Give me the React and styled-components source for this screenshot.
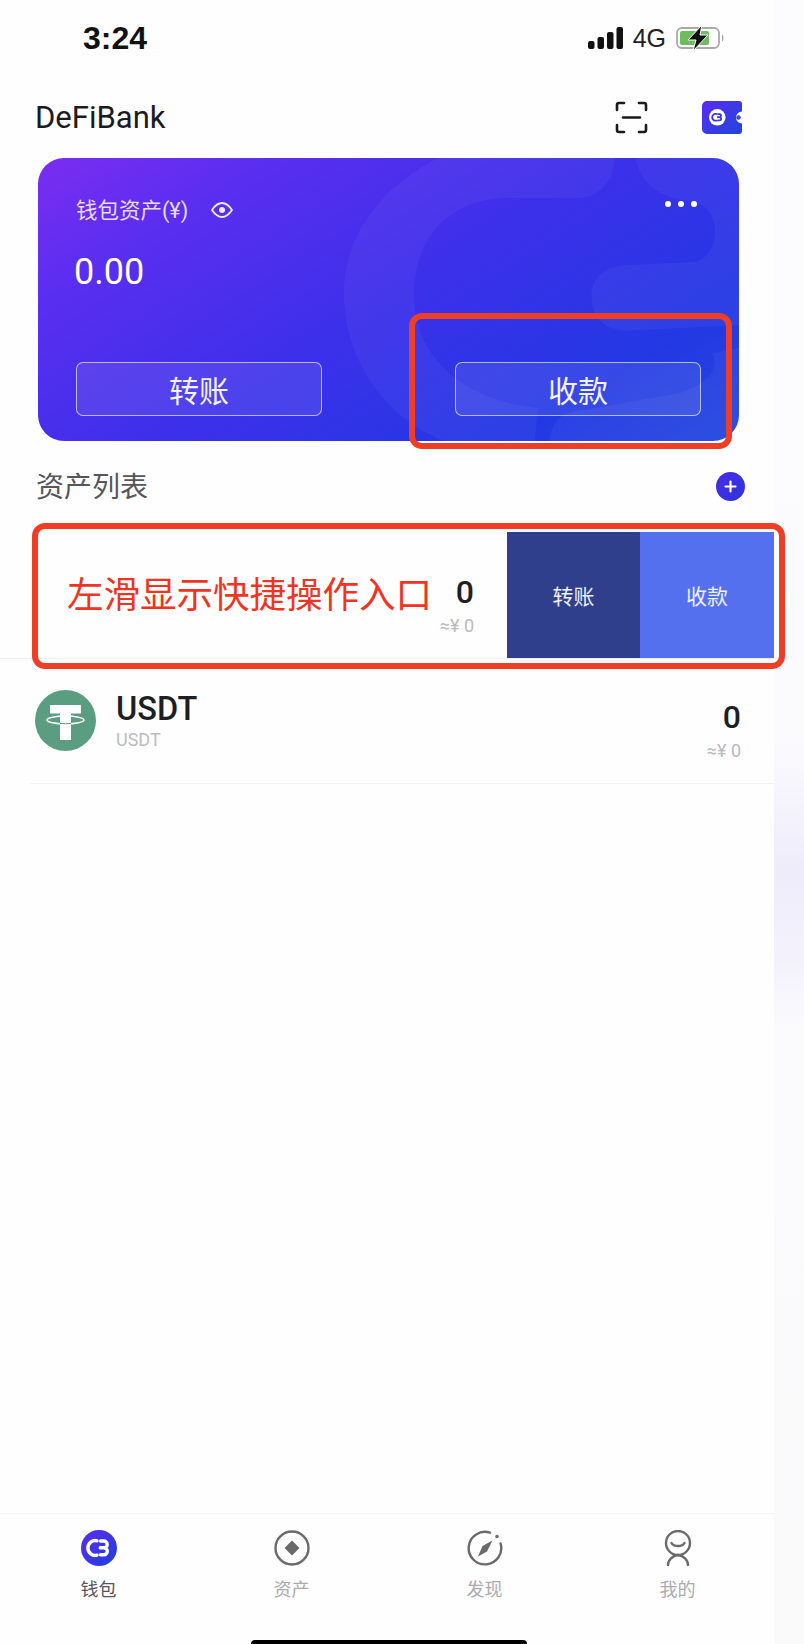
import React from 'react';
import styled, { createGlobalStyle } from 'styled-components';

const GlobalStyle = createGlobalStyle`
  html, body {
    margin: 0;
    padding: 0;
    background: #fefefe;
    font-family: Roboto, "Noto Sans CJK SC", "Noto Sans", sans-serif;
  }
`;

const Stage = styled.div`
  display: flex;
  width: 804px;
  height: 1644px;
  overflow: hidden;
`;

const Phone = styled.div`
  position: relative;
  display: flex;
  flex-direction: column;
  width: 774px;
  background: #fefefe;
`;

const SideStrip = styled.div`
  width: 30px;
  background: linear-gradient(
    180deg,
    #fcfcfe 0,
    #fbfbfe 740px,
    #eeecfb 870px,
    #f3f2fc 960px,
    #fbfbfd 1030px,
    #fafafb 100%
  );
`;

const StatusBar = styled.div`
  display: flex;
  align-items: center;
  justify-content: space-between;
  box-sizing: border-box;
  height: 76px;
  padding: 0 49px 0 83px;
`;

const Clock = styled.span`
  font-family: "Liberation Sans", sans-serif;
  font-size: 32px;
  font-weight: 700;
  color: #111;
`;

const StatusIcons = styled.div`
  display: flex;
  align-items: center;
  gap: 10px;
`;

const Network = styled.span`
  font-family: "Liberation Sans", sans-serif;
  font-size: 25px;
  color: #222;
`;

const Header = styled.header`
  display: flex;
  align-items: center;
  box-sizing: border-box;
  height: 82px;
  padding: 0 32px 0 35px;
`;

const Brand = styled.h1`
  flex: 1;
  margin: 0;
  font-size: 31px;
  font-weight: 400;
  color: #1b1b1f;
`;

const HeaderActions = styled.div`
  display: flex;
  align-items: center;
  gap: 54px;
`;

const CardWrap = styled.div`
  position: relative;
  width: 701px;
  margin-left: 38px;
`;

const Card = styled.section`
  position: relative;
  display: flex;
  flex-direction: column;
  box-sizing: border-box;
  height: 283px;
  padding: 38px 38px 25px 38px;
  border-radius: 26px;
  overflow: hidden;
  color: #fff;
  background: linear-gradient(148deg, #7b2df1 0%, #5a2ef0 20%, #3c30ea 50%, #2338e4 80%, #2448de 100%);
`;

const CardArt = styled.svg`
  position: absolute;
  inset: 0;
  width: 100%;
  height: 100%;
`;

const LabelRow = styled.div`
  position: relative;
  display: flex;
  align-items: center;
  gap: 23px;
  height: 24px;
`;

const CardLabel = styled.span`
  font-size: 21.5px;
  color: #e7dcfb;
`;

const EyeSlot = styled.span`
  display: flex;
  margin-top: 4px;
`;

const MoreDots = styled.div`
  display: flex;
  gap: 7px;
  margin: -8px 4px 0 auto;
`;

const Dot = styled.i`
  width: 6px;
  height: 6px;
  border-radius: 50%;
  background: #fff;
`;

const CardAmount = styled.div`
  position: relative;
  margin: 30px 0 0 -2px;
  font-size: 36px;
  line-height: 44px;
  color: #fdfcff;
`;

const CardButtons = styled.div`
  position: relative;
  display: flex;
  justify-content: space-between;
  margin-top: auto;
`;

const CardButton = styled.button`
  width: 246px;
  height: 54px;
  padding: 0;
  border: 1px solid rgba(255, 255, 255, 0.62);
  border-radius: 7px;
  background: rgba(255, 255, 255, 0.09);
  color: #f3f2fe;
  font-family: "Noto Sans CJK SC", sans-serif;
  font-size: 30px;
  line-height: 1;
`;

const Callout = styled.div`
  position: absolute;
  top: ${p => p.$top}px;
  left: ${p => p.$left}px;
  width: ${p => p.$width}px;
  height: ${p => p.$height}px;
  box-sizing: border-box;
  border: 6px solid #ee3e26;
  border-radius: 13px;
  pointer-events: none;
`;

const SectionHead = styled.div`
  display: flex;
  align-items: center;
  justify-content: space-between;
  box-sizing: border-box;
  height: 91px;
  padding: 0 29px 0 36px;
`;

const SectionTitle = styled.h2`
  margin: -3px 0 0;
  font-family: "Noto Sans CJK SC", sans-serif;
  font-size: 28px;
  font-weight: 400;
  color: #55555b;
`;

const AddButton = styled.span`
  display: flex;
  align-items: center;
  justify-content: center;
  width: 29px;
  height: 29px;
  border-radius: 50%;
  background: linear-gradient(135deg, #4a2be8, #2b35dc);
`;

const SwipeWrap = styled.div`
  position: relative;
`;

const SwipeRow = styled.div`
  display: flex;
  align-items: stretch;
  height: 127px;
  box-sizing: border-box;
  padding-left: 67px;
  border-bottom: 1px solid #eeeeee;
`;

const Hint = styled.span`
  align-self: center;
  margin-top: -4px;
  font-family: "Noto Sans CJK SC", sans-serif;
  font-size: 36.5px;
  line-height: 1;
  white-space: nowrap;
  color: #ee3524;
`;

const Balance = styled.div`
  display: flex;
  flex-direction: column;
  align-items: flex-end;
  justify-content: center;
  margin-left: auto;
  padding-top: 19px;
`;

const BalanceValue = styled.span`
  font-size: 32px;
  font-weight: 500;
  line-height: 38px;
  color: #1f1f23;
`;

const BalanceFiat = styled.span`
  margin-top: 4px;
  font-size: 18px;
  line-height: 22px;
  color: #b9b9bd;
`;

const SwipeActions = styled.div`
  display: flex;
  margin-left: 33px;
`;

const SwipeAction = styled.button`
  width: ${p => p.$width}px;
  padding: 0;
  border: 0;
  background: ${p => p.$bg};
  color: #eef0fb;
  font-family: "Noto Sans CJK SC", sans-serif;
  font-size: 21px;
`;

const AssetRow = styled.div`
  display: flex;
  align-items: center;
  box-sizing: border-box;
  height: 125px;
  margin-left: 30px;
  padding: 0 33px 2px 5px;
  border-bottom: 1px solid #f2f2f2;
`;

const AssetText = styled.div`
  display: flex;
  flex-direction: column;
  margin-left: 20px;
`;

const AssetName = styled.span`
  margin-top: 1px;
  font-size: 32.5px;
  font-weight: 500;
  line-height: 38px;
  color: #1f1f23;
`;

const AssetSub = styled.span`
  margin-top: 1px;
  font-size: 18px;
  line-height: 22px;
  color: #bcbcc0;
`;

const Spacer = styled.div`
  flex: 1;
`;

const TabBar = styled.nav`
  display: grid;
  grid-template-columns: repeat(4, 1fr);
  box-sizing: border-box;
  height: 131px;
  padding: 16px 0 0 2px;
  border-top: 1px solid #f3f3f3;
`;

const Tab = styled.div`
  display: flex;
  flex-direction: column;
  align-items: center;
`;

const TabLabel = styled.span`
  margin-top: 9px;
  font-family: "Noto Sans CJK SC", sans-serif;
  font-size: 18px;
  line-height: 26px;
  color: ${p => (p.$active ? '#55555a' : '#ababae')};
`;

const HomeBar = styled.div`
  position: absolute;
  left: 251px;
  bottom: 0;
  width: 276px;
  height: 4px;
  border-radius: 4px 4px 0 0;
  background: #000;
`;

const SignalIcon = () => (
  <svg width="35" height="22" viewBox="0 0 35 22">
    <rect x="0" y="14" width="6.5" height="8" rx="2" fill="#111" />
    <rect x="9.5" y="10" width="6.5" height="12" rx="2" fill="#111" />
    <rect x="19" y="5" width="6.5" height="17" rx="2" fill="#111" />
    <rect x="28.5" y="0" width="6.5" height="22" rx="2" fill="#111" />
  </svg>
);

const BatteryIcon = () => (
  <svg width="49" height="26" viewBox="0 0 49 26">
    <rect x="1" y="3" width="42" height="20" rx="5" fill="none" stroke="#a9aaa9" strokeWidth="1.8" />
    <rect x="4" y="6" width="29" height="14" rx="2" fill="#6dbd5f" />
    <path d="M46 9.5c2 1 2 6 0 7z" fill="#a9aaa9" />
    <path d="M26 0 12 15h8l-3 11 15-16h-8z" fill="#111" stroke="#fff" strokeWidth="1" />
  </svg>
);

const ScanIcon = () => (
  <svg width="33" height="33" viewBox="0 0 33 33" fill="none" stroke="#1b1b1f" strokeWidth="2.6" strokeLinecap="round" strokeLinejoin="round">
    <path d="M2 9V4a2 2 0 0 1 2-2h5M24 2h5a2 2 0 0 1 2 2v5M2 24v5a2 2 0 0 0 2 2h5M24 31h5a2 2 0 0 0 2-2v-5M8 16.5h17" />
  </svg>
);

// round "C3" mark, reused at different sizes
const LogoMark = ({ stroke = '#fff', width = 3.4 }) => (
  <g fill="none" stroke={stroke} strokeWidth={width} strokeLinecap="round">
    <path d="M16 10.800a7.400 7.400 0 1 0 0 14.400" />
    <path d="M19.500 11h3.300a3.300 3.300 0 0 1 0 6.800h-3.600M22.800 17.800a3.500 3.500 0 0 1 0 7h-3.300" />
  </g>
);

const WalletIcon = () => (
  <svg width="40" height="33" viewBox="0 0 40 33">
    <defs>
      <linearGradient id="walletFill" x1="0" y1="0" x2="1" y2="1">
        <stop offset="0" stopColor="#5a2cf0" />
        <stop offset="1" stopColor="#1f46dc" />
      </linearGradient>
    </defs>
    <path
      d="M5 0h32a3 3 0 0 1 3 3v7.5a6 6 0 0 0 0 12V30a3 3 0 0 1-3 3H5a5 5 0 0 1-5-5V5a5 5 0 0 1 5-5z"
      fill="url(#walletFill)"
    />
    <circle cx="36.5" cy="16.5" r="2.2" fill="#3a45e0" />
    <g transform="translate(7 8) scale(0.46)">
      <circle cx="18" cy="18" r="18" fill="#fff" />
      <LogoMark stroke="#3a34e6" width={4} />
    </g>
  </svg>
);

const EyeIcon = () => (
  <svg width="22" height="16" viewBox="0 0 22 16">
    <path d="M1 8c3-4.500 6.300-7 10-7s7 2.500 10 7c-3 4.500-6.300 7-10 7S4 12.500 1 8z" fill="none" stroke="#f1ebff" strokeWidth="1.8" />
    <circle cx="11" cy="8" r="3" fill="#f1ebff" />
  </svg>
);

const PlusIcon = () => (
  <svg width="13" height="13" viewBox="0 0 13 13" stroke="#fff" strokeWidth="2.2" strokeLinecap="round">
    <path d="M6.500 1.500v10M1.500 6.500h10" />
  </svg>
);

const TetherIcon = () => (
  <svg width="61" height="61" viewBox="0 0 61 61">
    <circle cx="30.500" cy="30.500" r="30.500" fill="#5b9d80" />
    <path d="M15 15h31v8.500H36V50H25V23.500H15z" fill="#fff" />
    <ellipse cx="30.500" cy="30" rx="18.500" ry="4" fill="none" stroke="#fff" strokeWidth="1.500" />
    <path d="M25 33.400c3.500.5 7.500.5 11 0" fill="none" stroke="#5b9d80" strokeWidth="1" />
  </svg>
);

const WalletTab = () => (
  <svg width="36" height="36" viewBox="0 0 36 36">
    <defs>
      <linearGradient id="tabFill" x1="0" y1="0" x2="1" y2="1">
        <stop offset="0" stopColor="#5a2cf0" />
        <stop offset="1" stopColor="#1f3fdc" />
      </linearGradient>
    </defs>
    <circle cx="18" cy="18" r="18" fill="url(#tabFill)" />
    <LogoMark />
  </svg>
);

const AssetsTab = () => (
  <svg width="36" height="36" viewBox="0 0 36 36">
    <circle cx="18" cy="18" r="16.500" fill="none" stroke="#6a6a6a" strokeWidth="2.400" />
    <path d="M18 10.500 25.500 18 18 25.500 10.500 18z" fill="#6a6a6a" />
  </svg>
);

const DiscoverTab = () => (
  <svg width="36" height="36" viewBox="0 0 36 36">
    <path d="M23 2.600A16.300 16.300 0 1 0 33.600 13.500" fill="none" stroke="#6a6a6a" strokeWidth="2.400" strokeLinecap="round" />
    <circle cx="30" cy="6.500" r="1.800" fill="#6a6a6a" />
    <path d="M25.500 10.500 20 21.500 11 26.500 15.500 16z" fill="#6a6a6a" />
  </svg>
);

const ProfileTab = () => (
  <svg width="36" height="36" viewBox="0 0 36 36" fill="none" stroke="#6a6a6a" strokeWidth="2.400" strokeLinecap="round">
    <circle cx="18" cy="13" r="12" />
    <path d="M11.500 13c2 4 11 4 13 0" />
    <path d="M8 35c0-5 4.500-9.500 10-10 5.500.5 10 5 10 10" />
  </svg>
);

const TABS = [
  { label: '钱包', icon: <WalletTab />, active: true },
  { label: '资产', icon: <AssetsTab /> },
  { label: '发现', icon: <DiscoverTab /> },
  { label: '我的', icon: <ProfileTab /> },
];

const App = () => (
  <Stage>
    <GlobalStyle />
    <Phone>
      <StatusBar>
        <Clock>3:24</Clock>
        <StatusIcons>
          <SignalIcon />
          <Network>4G</Network>
          <BatteryIcon />
        </StatusIcons>
      </StatusBar>

      <Header>
        <Brand>DeFiBank</Brand>
        <HeaderActions>
          <ScanIcon />
          <WalletIcon />
        </HeaderActions>
      </Header>

      <CardWrap>
        <Card>
          <CardArt viewBox="0 0 699 283" preserveAspectRatio="none">
            <g fill="#fff" fillOpacity="0.045">
              <path d="M399 0C340 30 305 80 305 135c0 65 40 125 100 148h90c2-13 2-25 4-33-59-5-124-40-124-113 0-57 35-97 95-97h70c20 0 35-20 35-40z" />
              <path d="M596 0c4 25 24 40 54 43 20 4 25 17 25 30 0 17-10 31-23 31l-62 3c-25 0-38 13-38 30 0 18 8 33 33 36l114-6V0z" />
              <path d="M510 283c2-21 15-31 35-31l95-17c30-10 40-25 32-40l27-5v93z" />
            </g>
          </CardArt>
          <LabelRow>
            <CardLabel>钱包资产(¥)</CardLabel>
            <EyeSlot>
              <EyeIcon />
            </EyeSlot>
            <MoreDots>
              <Dot />
              <Dot />
              <Dot />
            </MoreDots>
          </LabelRow>
          <CardAmount>0.00</CardAmount>
          <CardButtons>
            <CardButton>转账</CardButton>
            <CardButton>收款</CardButton>
          </CardButtons>
        </Card>
        <Callout $top={155} $left={371} $width={323} $height={136} />
      </CardWrap>

      <SectionHead>
        <SectionTitle>资产列表</SectionTitle>
        <AddButton>
          <PlusIcon />
        </AddButton>
      </SectionHead>

      <SwipeWrap>
        <SwipeRow>
          <Hint>左滑显示快捷操作入口</Hint>
          <Balance>
            <BalanceValue>0</BalanceValue>
            <BalanceFiat>≈¥ 0</BalanceFiat>
          </Balance>
          <SwipeActions>
            <SwipeAction $width={133} $bg="#2f3f8c">转账</SwipeAction>
            <SwipeAction $width={134} $bg="#5470ee">收款</SwipeAction>
          </SwipeActions>
        </SwipeRow>
        <Callout $top={-9} $left={32} $width={753} $height={146} />
      </SwipeWrap>

      <AssetRow>
        <TetherIcon />
        <AssetText>
          <AssetName>USDT</AssetName>
          <AssetSub>USDT</AssetSub>
        </AssetText>
        <Balance>
          <BalanceValue>0</BalanceValue>
          <BalanceFiat>≈¥ 0</BalanceFiat>
        </Balance>
      </AssetRow>

      <Spacer />

      <TabBar>
        {TABS.map(tab => (
          <Tab key={tab.label}>
            {tab.icon}
            <TabLabel $active={tab.active}>{tab.label}</TabLabel>
          </Tab>
        ))}
      </TabBar>
      <HomeBar />
    </Phone>
    <SideStrip />
  </Stage>
);

export default App;
